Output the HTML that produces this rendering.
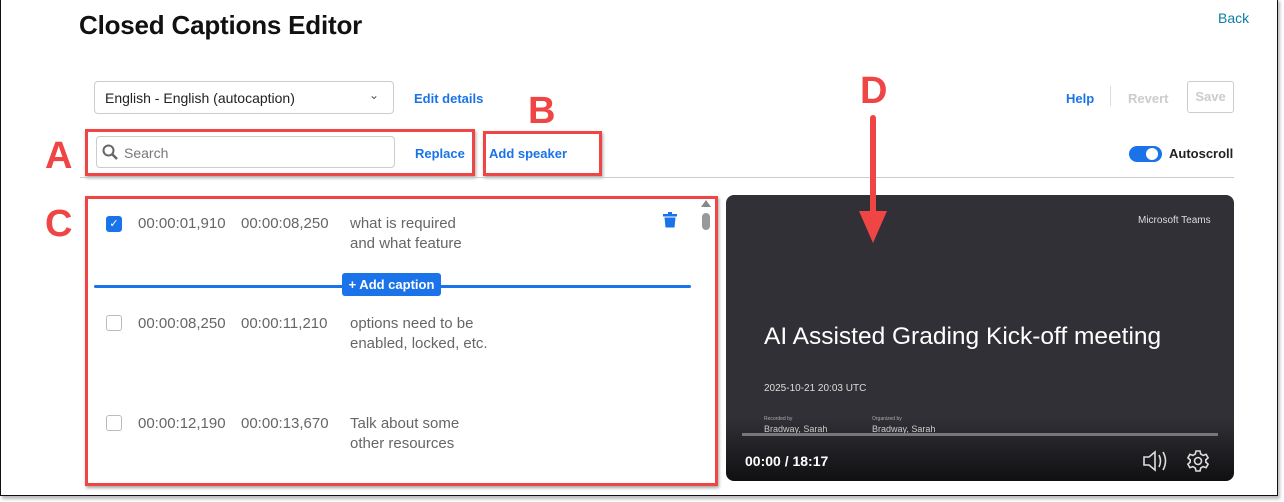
<!DOCTYPE html>
<html><head><style>
*{margin:0;padding:0;box-sizing:border-box}
body{width:1284px;height:502px;background:#fff;font-family:"Liberation Sans",sans-serif;position:relative;overflow:hidden}
.a{position:absolute}
.frame{left:0;top:-2px;width:1278px;height:498px;border:1.5px solid #111;box-shadow:2px 3px 3px #bbb}
.red{border:3px solid #f04545;box-shadow:1px 2px 3px rgba(0,0,0,.35)}
.lbl{color:#f04545;font-weight:bold;font-size:38px}
.link{color:#1a73e8;font-weight:bold;font-size:13px}
.t{color:#666;font-size:15px}
.cb{width:16px;height:16px;border:1px solid #bbb;border-radius:3px;background:#fff}
</style></head><body>
<div class="a frame"></div>
<div class="a" style="left:79px;top:10px;font-size:26px;font-weight:bold;color:#111;letter-spacing:-0.2px">Closed Captions Editor</div>
<div class="a" style="left:1218px;top:10px;font-size:14px;color:#0a7ea4">Back</div>

<div class="a" style="left:94px;top:81px;width:300px;height:33px;border:1px solid #ccc;border-radius:4px"></div>
<div class="a" style="left:105px;top:90px;font-size:14px;color:#222">English - English (autocaption)</div>
<div class="a" style="left:369px;top:88px;font-size:12px;color:#555">&#8964;</div>
<div class="a link" style="left:414px;top:91px">Edit details</div>

<div class="a link" style="left:1066px;top:91px">Help</div>
<div class="a" style="left:1110px;top:86px;width:1px;height:20px;background:#ddd"></div>
<div class="a" style="left:1128px;top:91px;font-size:13px;font-weight:bold;color:#ccc">Revert</div>
<div class="a" style="left:1187px;top:81px;width:47px;height:32px;border:1px solid #ccc;border-radius:3px;font-size:13px;font-weight:bold;color:#ccc;text-align:center;line-height:30px">Save</div>

<div class="a lbl" style="left:528px;top:90px">B</div>
<div class="a lbl" style="left:860px;top:70px">D</div>
<div class="a lbl" style="left:45px;top:135px">A</div>
<div class="a lbl" style="left:45px;top:203px">C</div>

<div class="a" style="left:96px;top:136px;width:299px;height:32px;border:1px solid #ccc;border-radius:4px"></div>
<svg class="a" style="left:102px;top:144px" width="16" height="16"><circle cx="6.5" cy="6.5" r="5" fill="none" stroke="#666" stroke-width="2"/><line x1="10" y1="10" x2="15" y2="15" stroke="#666" stroke-width="2.5"/></svg>
<div class="a" style="left:124px;top:145px;font-size:14px;color:#777">Search</div>
<div class="a link" style="left:415px;top:146px">Replace</div>
<div class="a link" style="left:489px;top:146px">Add speaker</div>
<div class="a red" style="left:85px;top:129px;width:390px;height:47px"></div>
<div class="a red" style="left:483px;top:131px;width:119px;height:45px"></div>

<div class="a" style="left:1129px;top:146px;width:33px;height:16px;border-radius:8px;background:#1a73e8"></div>
<div class="a" style="left:1146px;top:148px;width:12px;height:12px;border-radius:6px;background:#fff"></div>
<div class="a" style="left:1169px;top:146px;font-size:13px;font-weight:bold;color:#222">Autoscroll</div>
<div class="a" style="left:80px;top:177px;width:1154px;height:1px;background:#ccc"></div>

<div class="a cb" style="left:106px;top:216px;background:#1a73e8;border-color:#1a73e8;color:#fff;font-size:11px;text-align:center;line-height:14px">&#10003;</div>
<div class="a t" style="left:138px;top:215px">00:00:01,910</div>
<div class="a t" style="left:241px;top:215px">00:00:08,250</div>
<div class="a t" style="left:350px;top:214px;line-height:20px">what is required<br>and what feature</div>
<svg class="a" style="left:663px;top:212px" width="14" height="16"><rect x="0" y="2" width="14" height="2.5" fill="#1a73e8"/><rect x="5" y="0" width="4" height="3" fill="#1a73e8"/><path d="M1.5 5.5h11l-1 10h-9z" fill="#1a73e8"/></svg>
<div class="a" style="left:701px;top:200px;width:0;height:0;border-left:5px solid transparent;border-right:5px solid transparent;border-bottom:7px solid #888"></div>
<div class="a" style="left:702px;top:213px;width:8px;height:17px;border-radius:4px;background:#999"></div>

<div class="a" style="left:94px;top:285px;width:597px;height:3px;border-radius:2px;background:#1a73e8"></div>
<div class="a" style="left:342px;top:273px;width:99px;height:23px;border-radius:3px;background:#1a73e8;color:#fff;font-size:13px;font-weight:bold;text-align:center;line-height:23px">+ Add caption</div>

<div class="a cb" style="left:106px;top:315px"></div>
<div class="a t" style="left:138px;top:315px">00:00:08,250</div>
<div class="a t" style="left:241px;top:315px">00:00:11,210</div>
<div class="a t" style="left:350px;top:314px;line-height:20px">options need to be<br>enabled, locked, etc.</div>
<div class="a cb" style="left:106px;top:415px"></div>
<div class="a t" style="left:138px;top:415px">00:00:12,190</div>
<div class="a t" style="left:241px;top:415px">00:00:13,670</div>
<div class="a t" style="left:350px;top:414px;line-height:20px">Talk about some<br>other resources</div>
<div class="a red" style="left:85px;top:196px;width:633px;height:290px"></div>

<div class="a" style="left:726px;top:195px;width:508px;height:286px;border-radius:8px;background:linear-gradient(#313036 0,#313036 78%,#101012 100%);overflow:hidden">
<div class="a" style="left:412px;top:20px;font-size:10px;color:#ddd">Microsoft Teams</div>
<div class="a" style="left:38px;top:128px;font-size:24.5px;color:#fff">AI Assisted Grading Kick-off meeting</div>
<div class="a" style="left:38px;top:188px;font-size:10px;color:#ddd">2025-10-21 20:03 UTC</div>
<div class="a" style="left:38px;top:221px;font-size:5px;color:#aaa">Recorded by</div>
<div class="a" style="left:146px;top:221px;font-size:5px;color:#aaa">Organized by</div>
<div class="a" style="left:38px;top:229px;font-size:9px;color:#ccc">Bradway, Sarah</div>
<div class="a" style="left:146px;top:229px;font-size:9px;color:#ccc">Bradway, Sarah</div>
<div class="a" style="left:16px;top:238px;width:476px;height:3px;background:#777"></div>
<div class="a" style="left:19px;top:258px;font-size:14px;font-weight:bold;color:#fff">00:00 / 18:17</div>
<svg class="a" style="left:416px;top:254px" width="28" height="24" fill="none" stroke="#ddd" stroke-width="1.6"><path d="M2 8h5l6-5v18l-6-5H2z"/><path d="M17 6q3 6 0 12M21 3q5 9 0 18"/></svg>
<svg class="a" style="left:460px;top:254px" width="24" height="24" fill="none" stroke="#ddd" stroke-width="1.6"><circle cx="12" cy="12" r="3.5"/><path d="M10 2h4l.7 3 2.4 1.4 3-1 2 3.4-2.3 2.1v2.2l2.3 2.1-2 3.4-3-1-2.4 1.4-.7 3h-4l-.7-3-2.4-1.4-3 1-2-3.4 2.3-2.1v-2.2L1.9 8.8l2-3.4 3 1L9.3 5z"/></svg>
</div>

<svg class="a" style="left:858px;top:115px" width="30" height="130"><rect x="12" y="0" width="6" height="100" rx="3" fill="#f04545"/><path d="M1 96h28l-14 32z" fill="#f04545"/></svg>
</body></html>
